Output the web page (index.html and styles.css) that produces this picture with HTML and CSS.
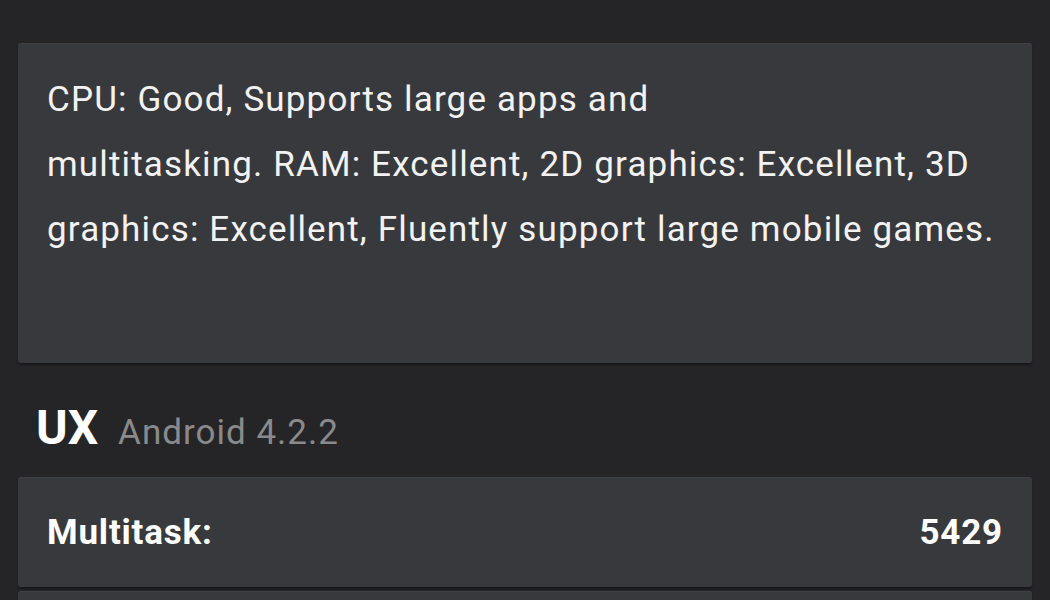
FILE: index.html
```html
<!DOCTYPE html>
<html>
<head>
<meta charset="utf-8">
<link rel="stylesheet" href="styles.css">
</head>
<body>
<div class="page">
  <div class="card summary">
    <p class="desc">CPU: Good, Supports large apps and<br>multitasking. RAM: Excellent, 2D graphics: Excellent, 3D graphics: Excellent, Fluently support large mobile games.</p>
  </div>
  <div class="section-head">
    <span class="title">UX</span>
    <span class="sub">Android 4.2.2</span>
  </div>
  <div class="card row">
    <span class="label">Multitask:</span>
    <span class="value">5429</span>
  </div>
  <div class="card row"></div>
</div>
</body>
</html>
```

FILE: styles.css
```css
html, body {
  margin: 0;
  padding: 0;
  background: #252528;
  font-family: Roboto, "Noto Sans", sans-serif;
  color: #f4f4f4;
  overflow: hidden;
}
.page {
  padding: 43px 18px 0 18px;
  display: flex;
  flex-direction: column;
}
.card {
  background: #38393d;
  border-radius: 3px;
  box-shadow: inset 0 1px 0 rgba(255,255,255,0.04), 0 2px 2px rgba(0,0,0,0.35);
}
.summary {
  height: 320px;
  box-sizing: border-box;
  padding: 24px 29px 0 29px;
}
.desc {
  margin: 0;
  font-size: 35px;
  line-height: 65px;
  letter-spacing: 1.15px;
  color: #f2f2f2;
}
.section-head {
  display: flex;
  align-items: baseline;
  gap: 20px;
  padding: 41px 0 0 18px;
  height: 114px;
  box-sizing: border-box;
  line-height: 1;
}
.title {
  font-size: 48px;
  font-weight: 700;
  color: #ffffff;
}
.sub {
  font-size: 35px;
  letter-spacing: 1px;
  color: #8a8a8c;
}
.row {
  height: 110px;
  box-sizing: border-box;
  display: flex;
  justify-content: space-between;
  align-items: center;
  padding: 0 29px;
  margin-bottom: 4px;
  font-size: 35px;
  font-weight: 700;
  letter-spacing: 0.8px;
  color: #ffffff;
}
```
